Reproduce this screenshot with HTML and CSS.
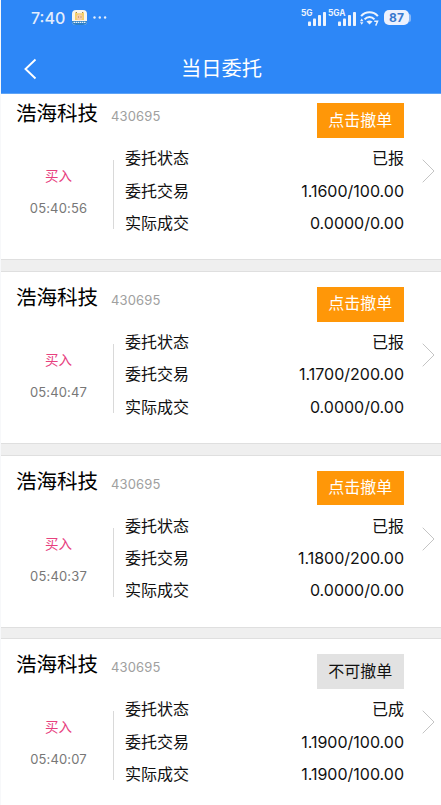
FILE: index.html
```
<!DOCTYPE html>
<html lang="zh-CN">
<head>
    <meta charset="UTF-8">
    <meta name="viewport" content="width=device-width, initial-scale=1.0">
    <title>当日委托</title>
    <link rel="stylesheet" href="styles.css">
</head>
<body>

    <div class="header">
        <div class="status-bar">
            <div class="status-left">
                <span class="clock">7:40</span>
                <svg class="app-icon" width="15" height="15" viewBox="0 0 15 15">
                    <rect width="15" height="15" rx="4" fill="#f7f5ee"/>
                    <path d="M0 11h15a4 4 0 0 1-4 4H4a4 4 0 0 1-4-4z" fill="#2c7fc8"/>
                    <path d="M3 2l2 1.200h5L12 2v8H3z" fill="#f5cf68"/>
                    <circle cx="7.500" cy="7.300" r="3" fill="#f7cdaa"/>
                    <path d="M4 2l1 1M11 2l-1 1M6 7h1M8.500 7h1" stroke="#8e6634" stroke-width=".8"/>
                    <path d="M1.500 12.300h12" stroke="#e8f2fb" stroke-width="1.300" stroke-dasharray="1.500 .6"/>
                </svg>
                <svg class="dots" width="14" height="3" viewBox="0 0 14 3" fill="#e4edfc">
                    <circle cx="1.500" cy="1.500" r="1.200"/>
                    <circle cx="6.800" cy="1.500" r="1.200"/>
                    <circle cx="12.100" cy="1.500" r="1.200"/>
                </svg>
            </div>
            <div class="status-right">
                <div class="signal">
                    <span class="net">5G</span>
                    <svg width="18" height="15" viewBox="0 0 18 15" fill="#edf3fd">
                        <rect x="0" y="10.500" width="3" height="4.500" rx=".8"/>
                        <rect x="5" y="7.500" width="3" height="7.500" rx=".8"/>
                        <rect x="10" y="4" width="3" height="11" rx=".8"/>
                        <rect x="15" y="1" width="3" height="14" rx=".8"/>
                    </svg>
                </div>
                <div class="signal signal-wide">
                    <span class="net">5GA</span>
                    <svg width="18" height="15" viewBox="0 0 18 15" fill="#edf3fd">
                        <rect x="0" y="10.500" width="3" height="4.500" rx=".8"/>
                        <rect x="5" y="7.500" width="3" height="7.500" rx=".8"/>
                        <rect x="10" y="4" width="3" height="11" rx=".8"/>
                        <rect x="15" y="1" width="3" height="14" rx=".8"/>
                    </svg>
                </div>
                <svg class="wifi" width="19" height="16" viewBox="0 0 20 16" fill="none" stroke="#edf3fd">
                    <path d="M1.200 6C6 .6 14 .6 18.800 6" stroke-width="2.200"/>
                    <path d="M4.800 9.500c3-3.400 7.400-3.400 10.400 0" stroke-width="2.200"/>
                    <path d="M10 14.800L6.800 11.800q3.200-2.400 6.400 0z" fill="#edf3fd" stroke="none"/>
                    <path d="M1.800 8.500L0 11.300h3.600zM1.800 15.200L0 12.400h3.600z" fill="#edf3fd" stroke="none"/>
                    <path d="M15 11.500h3.500L16.500 16" stroke-width="1.500"/>
                </svg>
                <div class="battery">87</div>
                <span class="battery-cap"></span>
            </div>
        </div>
        <div class="nav-bar">
            <svg class="back" width="14" height="22" viewBox="0 0 14 22" fill="none" stroke="#fff" stroke-width="1.900">
                <path d="M12.500 1.500L2.500 11l10 9.500"/>
            </svg>
            <h1>当日委托</h1>
        </div>
    </div>

    <div class="order-list">
        <div class="order">
            <div class="order-head">
                <span class="name">浩海科技</span>
                <span class="code">430695</span>
                <button class="cancel">点击撤单</button>
            </div>
            <div class="order-body">
                <div class="side">
                    <div class="type">买入</div>
                    <div class="time">05:40:56</div>
                </div>
                <div class="detail">
                    <div class="row"><span>委托状态</span><span>已报</span></div>
                    <div class="row"><span>委托交易</span><span class="num">1.1600/100.00</span></div>
                    <div class="row"><span>实际成交</span><span class="num">0.0000/0.00</span></div>
                </div>
                <svg class="arrow" width="13" height="24" viewBox="0 0 13 24"><path d="M.7.700L12 12 .7 23.300"/></svg>
            </div>
        </div>

        <div class="order">
            <div class="order-head">
                <span class="name">浩海科技</span>
                <span class="code">430695</span>
                <button class="cancel">点击撤单</button>
            </div>
            <div class="order-body">
                <div class="side">
                    <div class="type">买入</div>
                    <div class="time">05:40:47</div>
                </div>
                <div class="detail">
                    <div class="row"><span>委托状态</span><span>已报</span></div>
                    <div class="row"><span>委托交易</span><span class="num">1.1700/200.00</span></div>
                    <div class="row"><span>实际成交</span><span class="num">0.0000/0.00</span></div>
                </div>
                <svg class="arrow" width="13" height="24" viewBox="0 0 13 24"><path d="M.7.700L12 12 .7 23.300"/></svg>
            </div>
        </div>

        <div class="order">
            <div class="order-head">
                <span class="name">浩海科技</span>
                <span class="code">430695</span>
                <button class="cancel">点击撤单</button>
            </div>
            <div class="order-body">
                <div class="side">
                    <div class="type">买入</div>
                    <div class="time">05:40:37</div>
                </div>
                <div class="detail">
                    <div class="row"><span>委托状态</span><span>已报</span></div>
                    <div class="row"><span>委托交易</span><span class="num">1.1800/200.00</span></div>
                    <div class="row"><span>实际成交</span><span class="num">0.0000/0.00</span></div>
                </div>
                <svg class="arrow" width="13" height="24" viewBox="0 0 13 24"><path d="M.7.700L12 12 .7 23.300"/></svg>
            </div>
        </div>

        <div class="order">
            <div class="order-head">
                <span class="name">浩海科技</span>
                <span class="code">430695</span>
                <button class="cancel disabled" disabled>不可撤单</button>
            </div>
            <div class="order-body">
                <div class="side">
                    <div class="type">买入</div>
                    <div class="time">05:40:07</div>
                </div>
                <div class="detail">
                    <div class="row"><span>委托状态</span><span>已成</span></div>
                    <div class="row"><span>委托交易</span><span class="num">1.1900/100.00</span></div>
                    <div class="row"><span>实际成交</span><span class="num">1.1900/100.00</span></div>
                </div>
                <svg class="arrow" width="13" height="24" viewBox="0 0 13 24"><path d="M.7.700L12 12 .7 23.300"/></svg>
            </div>
        </div>
    </div>

</body>
</html>
```
FILE: styles.css
```
* {
    box-sizing: border-box;
}

body {
    margin: 0;
    height: 805px;
    overflow: hidden;
    border-left: 1px solid #f7f8fa;
    background-color: #efefef;
    font-family: Inter, "Noto Sans CJK SC", sans-serif;
    color: #111;
}

.header {
    position: relative;
    z-index: 1;
    height: 94px;
    background-color: #2d87f7;
    border-bottom: 1px solid #5fa4f6;
    color: #fff;
}

.status-bar {
    display: flex;
    justify-content: space-between;
    height: 35px;
    padding: 0 30px 0 30px;
}

.status-left,
.status-right {
    display: flex;
    align-items: center;
}

.clock {
    width: 41px;
    font-size: 16px;
    font-weight: 500;
    color: #e4edfc;
    white-space: nowrap;
}

.dots {
    margin-left: 6px;
}

.signal {
    display: flex;
    align-items: flex-end;
    justify-content: flex-end;
    position: relative;
    width: 25px;
    height: 16px;
}

.signal-wide {
    width: 28px;
    margin-left: 2px;
}

.net {
    position: absolute;
    left: 0;
    top: -1px;
    font-size: 8.300px;
    line-height: 8px;
    font-weight: 700;
    color: #edf3fd;
}

.wifi {
    margin-left: 4px;
}

.battery {
    width: 25px;
    height: 15px;
    margin-left: 5px;
    border-radius: 5px;
    background-color: #edf1fd;
    color: #3979ce;
    font-size: 12px;
    font-weight: 700;
    line-height: 15px;
    text-align: center;
}

.battery-cap {
    width: 2px;
    height: 8px;
    border-radius: 0 2px 2px 0;
    background-color: #84b5f6;
}

.nav-bar {
    display: flex;
    align-items: center;
    height: 67px;
    padding: 0 22px;
}

.nav-bar h1 {
    flex: 1;
    margin: 0 13px 0 0;
    font-size: 20.300px;
    font-weight: 400;
    line-height: 29px;
    text-align: center;
}

/* the list is scrolled slightly under the header */
.order-list {
    margin-top: -5.700px;
}

.order {
    height: 171px;
    margin-bottom: 12.700px;
    padding-top: 15px;
    background-color: #fff;
    box-shadow: 0 0 0 1px #dfdfdf;
}

.order-head {
    display: flex;
    height: 39px;
    padding: 0 37px 0 15px;
}

.name {
    font-size: 20.500px;
    line-height: 22px;
    color: #000;
}

.code {
    margin-left: 13px;
    font-size: 13px;
    line-height: 27px;
    letter-spacing: 0.150px;
    color: #a0a0a0;
}

.cancel {
    width: 87.500px;
    height: 34.500px;
    margin-left: auto;
    padding: 0 0 4px;
    border: none;
    background-color: #ff9708;
    color: #fff;
    font-family: inherit;
    font-size: 16px;
}

.cancel.disabled {
    background-color: #e2e2e2;
    color: #111;
}

.order-body {
    display: flex;
}

.side {
    width: 113px;
    height: 69px;
    margin-top: 18px;
    border-right: 1px solid #d9d9d9;
    padding-left: 3px;
    text-align: center;
}

.type {
    font-size: 13.500px;
    line-height: 32px;
    color: #e7417e;
}

.time {
    font-size: 13px;
    line-height: 32.500px;
    letter-spacing: 0.150px;
    color: #777;
}

.detail {
    flex: 1;
    padding-left: 11px;
}

.row {
    display: flex;
    justify-content: space-between;
    font-size: 16px;
    line-height: 32.300px;
}

.num {
    letter-spacing: 0;
}

.arrow {
    margin: 17px 6px 0 18px;
    fill: none;
    stroke: #c4c4c4;
    stroke-width: 1;
}
```
